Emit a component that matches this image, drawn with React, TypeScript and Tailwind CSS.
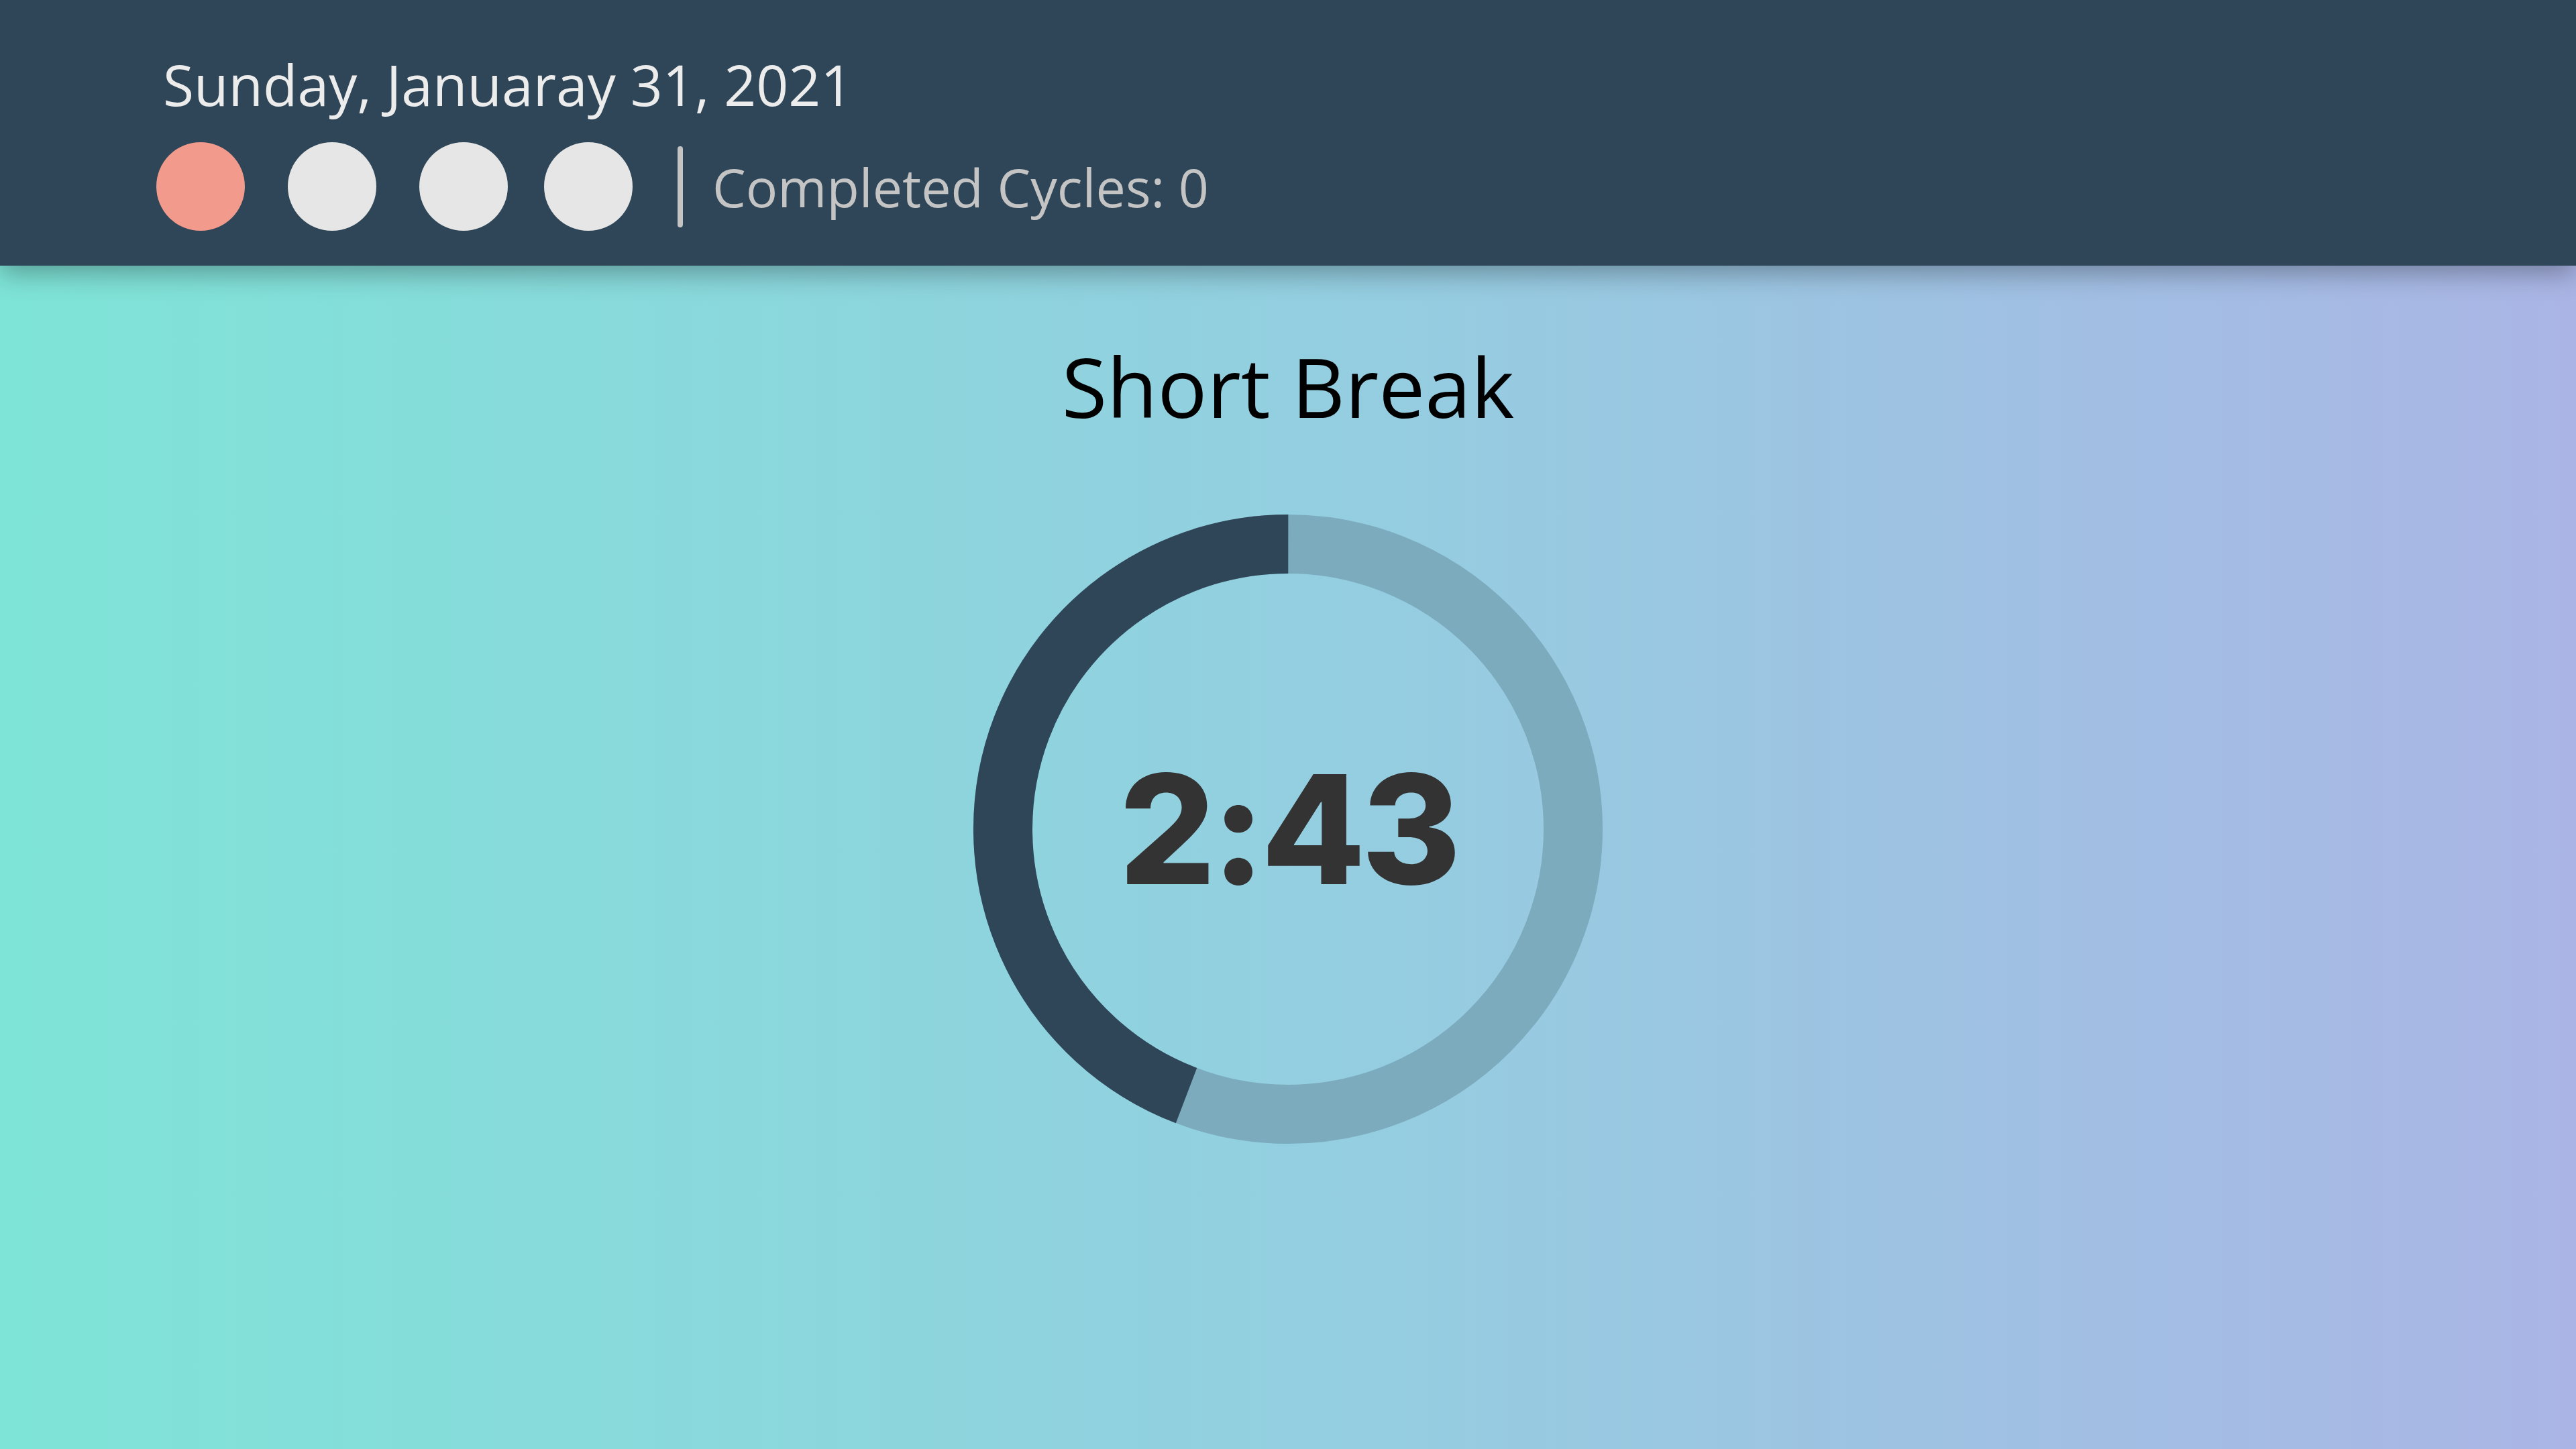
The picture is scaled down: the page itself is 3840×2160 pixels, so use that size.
import React from "react";

const RING = 938;
const STROKE = 88;
const R = (RING - STROKE) / 2;
const CIRC = 2 * Math.PI * R;
const elapsed = 0.442;

const Dot = ({ active }: { active?: boolean }) => (
  <div
    className={
      active
        ? "h-[132px] w-[132px] shrink-0 rounded-full bg-[#f29b8d]"
        : "h-[132px] w-[132px] shrink-0 rounded-full bg-[#e6e6e6]"
    }
  />
);

const App: React.FC = () => {
  return (
    <div className="flex min-h-screen flex-col bg-[linear-gradient(90deg,#7ee4d7_0%,#93cfe0_50%,#aab5e5_100%)] font-['Open_Sans',sans-serif]">
      {/* Header */}
      <header className="relative z-10 flex h-[396px] flex-col bg-[#2e4657] pl-[233px] pt-[84px] shadow-[0_12px_36px_rgba(0,0,0,0.3)]">
        <p className="pl-[10px] text-[84px] leading-none text-[#ececec]">
          Sunday, Januaray 31, 2021
        </p>
        <div className="mt-[44px] flex items-center">
          <div className="flex items-center gap-[64px]">
            <Dot active />
            <Dot />
            <Dot />
          </div>
          <div className="ml-[54px]">
            <Dot />
          </div>
          <div className="ml-[67px] h-[121px] w-[8px] rounded-full bg-[#c4c4c4]" />
          <p className="ml-[44px] text-[79px] leading-none text-[#c4c4c4]">
            Completed Cycles: 0
          </p>
        </div>
      </header>

      {/* Timer */}
      <main className="flex flex-col items-center pt-[118px]">
        <h1 className="text-[123px] leading-none text-black">Short Break</h1>
        <div className="relative mt-[130px] h-[938px] w-[938px]">
          <svg width={RING} height={RING} viewBox={`0 0 ${RING} ${RING}`}>
            <circle
              cx={RING / 2}
              cy={RING / 2}
              r={R}
              fill="none"
              stroke="#7babbd"
              strokeWidth={STROKE}
            />
            <circle
              cx={RING / 2}
              cy={RING / 2}
              r={R}
              fill="none"
              stroke="#2e4657"
              strokeWidth={STROKE}
              strokeDasharray={`${CIRC * elapsed} ${CIRC}`}
              transform={`rotate(${-90 + 360 * (1 - elapsed)} ${RING / 2} ${RING / 2})`}
            />
          </svg>
          <div className="absolute inset-0 flex items-center justify-center">
            <span className="font-['Inter',sans-serif] text-[226px] font-extrabold leading-none tracking-[-6px] text-[#333333]">
              2:43
            </span>
          </div>
        </div>
      </main>
    </div>
  );
};

export default App;
